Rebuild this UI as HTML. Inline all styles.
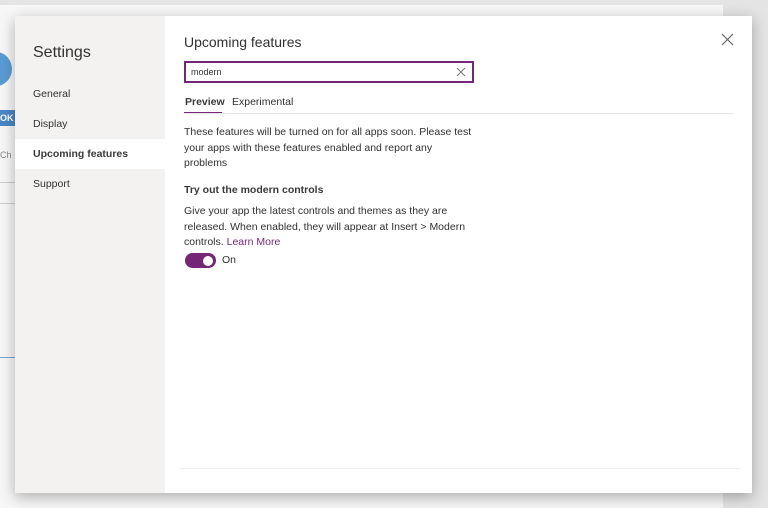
<!DOCTYPE html>
<html><head><style>
*{margin:0;padding:0;box-sizing:border-box}
body{width:768px;height:508px;overflow:hidden;background:#e4e4e4;font-family:"Liberation Sans",sans-serif;position:relative;color:#323130}
.bgcard{position:absolute;left:0;top:5px;width:723px;height:503px;background:#f7f7f7}
.modal{position:absolute;left:15px;top:16px;width:737px;height:477px;background:#fff;box-shadow:0 4px 14px rgba(0,0,0,.3)}
.side{position:absolute;left:0;top:0;width:150px;height:477px;background:#f3f2f1}
.side h1{position:absolute;left:18px;top:28px;font-size:16px;font-weight:normal;color:#323130}
.nav{position:absolute;left:0;width:150px;height:30px;line-height:30px;padding-left:18px;font-size:10.5px;color:#323130}
.nav.sel{background:#fff;font-weight:bold;color:#3b3a39}
.t{position:absolute;font-size:10.5px;line-height:15.5px;white-space:nowrap}
</style></head><body>
<div class="bgcard"></div>
<div style="position:absolute;left:-20px;top:52px;width:32px;height:34px;border-radius:50%;background:#5a9bd5"></div>
<div style="position:absolute;left:0;top:110px;width:15px;height:16px;background:#4a88c7;color:#fff;font-size:9px;line-height:16px;font-weight:bold">OK</div>
<div style="position:absolute;left:0;top:150px;font-size:9px;color:#888">Ch</div>
<div style="position:absolute;left:0;top:182px;width:15px;height:1px;background:#ccc"></div>
<div style="position:absolute;left:0;top:203px;width:15px;height:1px;background:#ccc"></div>
<div style="position:absolute;left:0;top:357px;width:15px;height:1px;background:#7aa7d0"></div>
<div class="modal">
 <div class="side">
  <h1>Settings</h1>
  <div class="nav" style="top:63px">General</div>
  <div class="nav" style="top:93px">Display</div>
  <div class="nav sel" style="top:123px">Upcoming features</div>
  <div class="nav" style="top:153px">Support</div>
 </div>
 <div style="position:absolute;left:169px;top:18px;font-size:14px;color:#323130">Upcoming features</div>
 <div style="position:absolute;left:169px;top:45px;width:290px;height:22px;border:2px solid #742774;font-size:9px;line-height:18px;padding-left:5px;color:#323130">modern
  <svg style="position:absolute;right:6px;top:4px" width="10" height="10" viewBox="0 0 10 10"><path d="M1 1L9 9M9 1L1 9" stroke="#777" stroke-width="1"/></svg></div>
 <svg style="position:absolute;left:706px;top:17px" width="13" height="13" viewBox="0 0 13 13"><path d="M1 1L12 12M12 1L1 12" stroke="#666" stroke-width="1.2"/></svg>
 <div class="t" style="left:170px;top:79px;font-weight:bold;color:#3b3a39">Preview</div>
 <div class="t" style="left:217px;top:79px">Experimental</div>
 <div style="position:absolute;left:169px;top:96px;width:38px;height:2px;background:#742774"></div>
 <div style="position:absolute;left:169px;top:97px;width:550px;height:1px;background:#e8e8e8"></div>
 <div class="t" style="left:169px;top:109px">These features will be turned on for all apps soon. Please test<br>your apps with these features enabled and report any<br>problems</div>
 <div class="t" style="left:169px;top:167px;font-weight:bold;color:#3b3a39">Try out the modern controls</div>
 <div class="t" style="left:169px;top:188px">Give your app the latest controls and themes as they are<br>released. When enabled, they will appear at Insert &gt; Modern<br>controls. <span style="color:#742774">Learn More</span></div>
 <div style="position:absolute;left:170px;top:237px;width:31px;height:15px;border-radius:8px;background:#742774"><div style="position:absolute;right:3px;top:2.5px;width:10px;height:10px;border-radius:50%;background:#fff"></div></div>
 <div class="t" style="left:207px;top:237px">On</div>
 <div style="position:absolute;left:165px;top:452px;width:560px;height:1px;background:#eee"></div>
</div>
</body></html>
